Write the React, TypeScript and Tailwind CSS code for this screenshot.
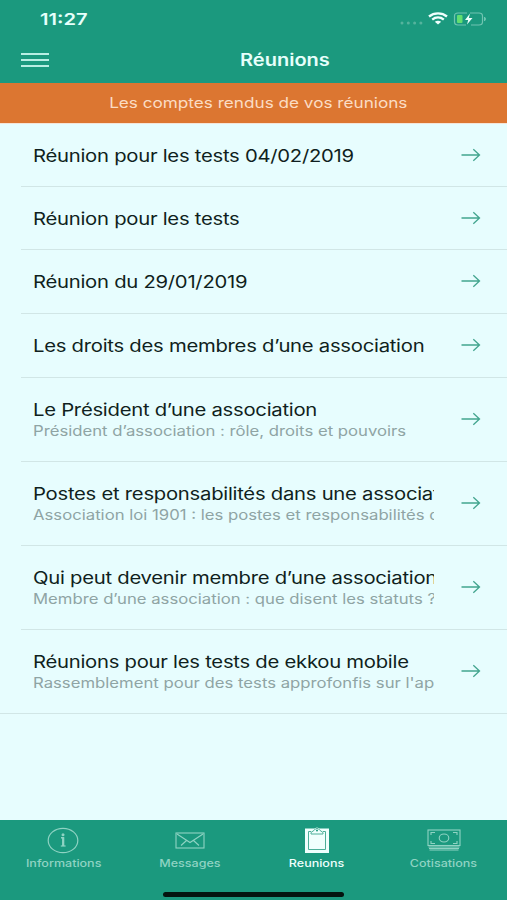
import type { ReactNode } from 'react';

type Meeting = { title: string; subtitle?: string; height: string; inset: string };

const meetings: Meeting[] = [
  { title: 'Réunion pour les tests 04/02/2019', height: 'h-[63px]', inset: 'pt-0.5' },
  { title: 'Réunion pour les tests', height: 'h-[63px]', inset: 'pt-0.5' },
  { title: 'Réunion du 29/01/2019', height: 'h-16', inset: 'pt-px' },
  { title: 'Les droits des membres d’une association', height: 'h-16', inset: 'pt-px' },
  {
    title: 'Le Président d’une association',
    subtitle: 'Président d’association : rôle, droits et pouvoirs',
    height: 'h-[84px]',
    inset: 'py-px',
  },
  {
    title: 'Postes et responsabilités dans une association',
    subtitle: 'Association loi 1901 : les postes et responsabilités des membres',
    height: 'h-[84px]',
    inset: 'py-px',
  },
  {
    title: 'Qui peut devenir membre d’une association ?',
    subtitle: 'Membre d’une association : que disent les statuts ?',
    height: 'h-[84px]',
    inset: 'py-px',
  },
  {
    title: 'Réunions pour les tests de ekkou mobile',
    subtitle: "Rassemblement pour des tests approfonfis sur l'application",
    height: 'h-[84px]',
    inset: 'py-px',
  },
];

function StatusBar() {
  return (
    <div className="flex h-[37px] items-center justify-between pr-5 pl-10">
      <span className="origin-left scale-x-[1.22] text-[16.5px] leading-5 font-semibold">11:27</span>
      <div className="flex items-center">
        <svg className="h-4 w-6" viewBox="0 0 24 16" fill="#55b39d">
          <circle cx="2" cy="12" r="1.5" />
          <circle cx="8.3" cy="12" r="1.5" />
          <circle cx="14.6" cy="12" r="1.5" />
          <circle cx="20.9" cy="12" r="1.5" />
        </svg>
        <svg className="ml-1 h-[13px] w-5" viewBox="0 0 20 13" fill="none" stroke="#effffd" strokeWidth="2.3">
          <path d="M1 4.5C6 .3 14 .3 19 4.5" />
          <path d="M4.2 7.6c3.4-2.8 8.2-2.8 11.6 0" />
          <path d="M6.8 9.8c2-1.5 4.4-1.5 6.4 0L10 12.6Z" fill="#effffd" stroke="none" />
        </svg>
        <svg className="ml-[5px] h-[14px] w-[34px]" viewBox="0 0 34 14" fill="none">
          <path d="M14 1H5Q1.5 1 1.5 4v6q0 3 3.5 3h8M18 13h8q3.500 0 3.500-3V4q0-3-3.500-3h-9" stroke="#70c4b1" strokeWidth="1.2" />
          <path d="M31.500 5q2 2 0 4Z" fill="#70c4b1" stroke="#70c4b1" />
          <rect x="4" y="3" width="5.500" height="8" rx="1" fill="#62de70" />
          <path d="M17 1.500 12 8h3.200L14 12.500 19.500 6h-3.700Z" fill="#effffd" />
        </svg>
      </div>
    </div>
  );
}

function ArrowIcon() {
  return (
    <svg className="mb-px ml-[27px] h-[14px] w-5 shrink-0" viewBox="0 0 20 14" fill="none" stroke="#43a58f" strokeWidth="1.3">
      <path d="M0.500 7H18.300M12.300 1.300 18.500 7l-6.200 5.700" />
    </svg>
  );
}

function MeetingRow({ meeting, last }: { meeting: Meeting; last: boolean }) {
  return (
    <li className={`flex items-center border-b border-[#d1e6e6] ${meeting.height} ${last ? 'pl-[33px]' : 'ml-[21px] pl-3'}`}>
      <div className={`w-[401px] shrink-0 overflow-hidden whitespace-nowrap ${meeting.inset}`}>
        <p className="w-max origin-left scale-x-[1.192] text-[17px] leading-[22px] tracking-[-0.013em] text-[#101f20]">
          {meeting.title}
        </p>
        {meeting.subtitle && (
          <p className="w-max origin-left scale-x-[1.193] text-[14px] leading-5 text-[#8fa4a4]">{meeting.subtitle}</p>
        )}
      </div>
      <ArrowIcon />
    </li>
  );
}

function Tab({ label, active = false, children }: { label: string; active?: boolean; children: ReactNode }) {
  return (
    <div className={`flex flex-1 flex-col items-center pt-1.5 ${active ? 'text-[#effffd]' : 'text-[#8fd3c3]'}`}>
      <div className="flex h-7 items-center">{children}</div>
      <span className="mt-0.5 scale-x-[1.23] text-[10.2px] leading-[14px] font-medium">{label}</span>
    </div>
  );
}

export default function App() {
  return (
    <div className="flex h-[900px] w-[507px] flex-col overflow-hidden bg-[#e7fdfe] font-['Inter','Liberation_Sans',sans-serif]">
      <header className="h-[83px] shrink-0 bg-[#1b997e] text-[#e6fffb]">
        <StatusBar />
        <div className="flex h-[46px] items-center pl-[21px]">
          <div className="flex w-7 flex-col gap-1">
            <span className="h-0.5 bg-[#b9eee3]" />
            <span className="h-0.5 bg-[#b9eee3]" />
            <span className="h-0.5 bg-[#b9eee3]" />
          </div>
          <h1 className="ml-[191px] origin-left scale-x-[1.2] text-[16.7px] leading-[22px] font-semibold">Réunions</h1>
        </div>
      </header>
      <div className="flex h-[41px] shrink-0 items-center justify-center border-b border-[#f4e5d9] bg-[#dc7631] pl-2.5">
        <span className="scale-x-[1.2] text-[14.3px] leading-5 whitespace-nowrap text-[#fbdcc4]">
          Les comptes rendus de vos réunions
        </span>
      </div>
      <ul className="flex flex-1 flex-col">
        {meetings.map((meeting, i) => (
          <MeetingRow key={meeting.title} meeting={meeting} last={i === meetings.length - 1} />
        ))}
      </ul>
      <footer className="flex h-20 shrink-0 flex-col justify-between bg-[#1b997e]">
        <nav className="flex">
          <Tab label="Informations">
            <svg className="h-[27px] w-8" viewBox="0 0 32 27" fill="none" stroke="currentColor">
              <ellipse cx="16" cy="13.500" rx="14.800" ry="12.200" strokeWidth="1.200" />
              <path d="M14 10.800h2.200v8.200" strokeWidth="1.500" />
              <path d="M16.200 10.200v8.800" strokeWidth="2.200" />
              <path d="M13.800 19h4.800" strokeWidth="1.200" />
              <circle cx="16" cy="7.800" r="1.500" fill="currentColor" stroke="none" />
            </svg>
          </Tab>
          <Tab label="Messages">
            <svg className="h-[17px] w-[30px]" viewBox="0 0 30 17" fill="none" stroke="currentColor" strokeWidth="1.100">
              <rect x="1" y="1" width="28" height="15" />
              <path d="M2 2l13 8.500L28 2M6 13.500l5.500-5M24 13.500l-5.500-5" />
            </svg>
          </Tab>
          <Tab label="Reunions" active>
            <svg className="h-[26px] w-6" viewBox="0 0 24 26" fill="none">
              <path d="M0 1.500h24V26H0Z" fill="#effffd" />
              <path d="M9 2.500Q12-1.500 15 2.500" fill="#effffd" />
              <path d="M6 4.500H3.500v18h17v-18H18" stroke="#4caf99" />
              <path d="M6 7V5.500L9.500 3Q12-.5 14.500 3L18 5.500V7Z" stroke="#4caf99" />
              <circle cx="12" cy="3.500" r="1" fill="#1b997e" />
            </svg>
          </Tab>
          <Tab label="Cotisations">
            <svg className="h-[22px] w-[34px]" viewBox="0 0 34 22" fill="none" stroke="currentColor" strokeWidth="1.100">
              <rect x="1" y="1" width="32" height="15.500" />
              <ellipse cx="17" cy="9" rx="4.800" ry="4" />
              <path d="M4 6V3.500h4M26 3.500h4V6M4 12v2.500h4M26 14.500h4V12" />
              <path d="M1.500 18h31M2 19.500h30M2.500 21h29" />
            </svg>
          </Tab>
        </nav>
        <div className="mb-[3px] ml-[163px] h-[5px] w-[181px] rounded-full bg-[#04140f]" />
      </footer>
    </div>
  );
}
